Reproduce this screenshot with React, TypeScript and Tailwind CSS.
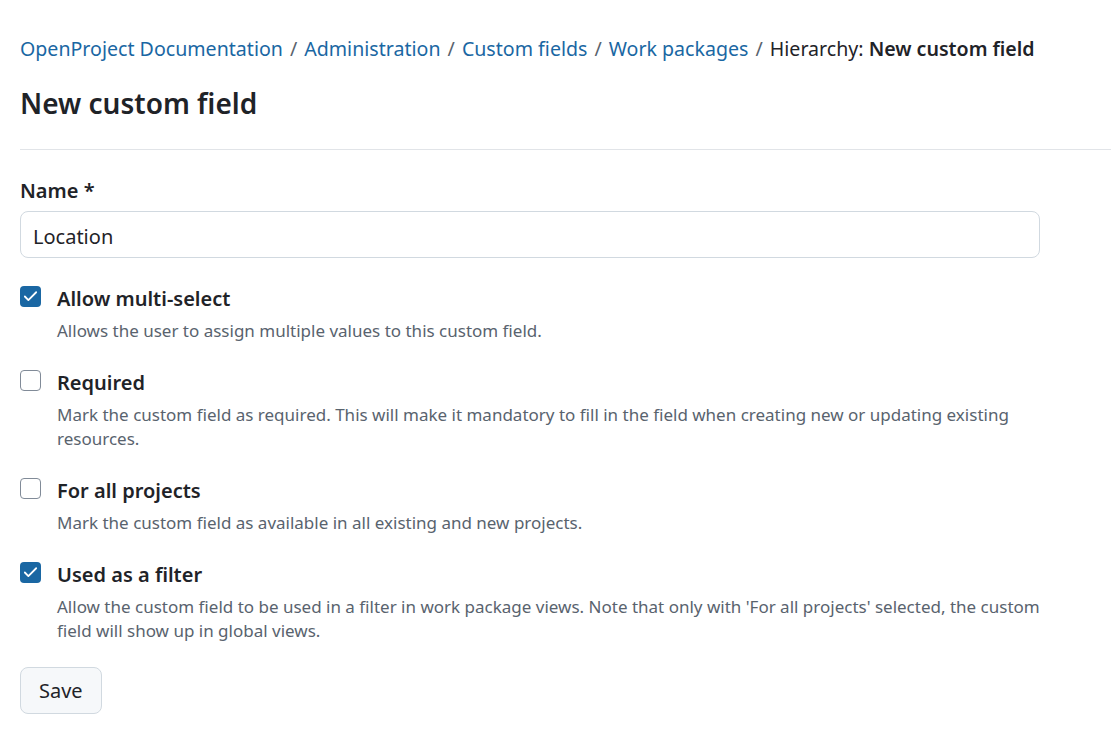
import { Check } from "lucide-react";

const options = [
  {
    label: "Allow multi-select",
    desc: "Allows the user to assign multiple values to this custom field.",
    checked: true,
  },
  {
    label: "Required",
    desc: "Mark the custom field as required. This will make it mandatory to fill in the field when creating new or updating existing resources.",
    checked: false,
  },
  {
    label: "For all projects",
    desc: "Mark the custom field as available in all existing and new projects.",
    checked: false,
  },
  {
    label: "Used as a filter",
    desc: "Allow the custom field to be used in a filter in work package views. Note that only with 'For all projects' selected, the custom field will show up in global views.",
    checked: true,
  },
];

export default function App() {
  return (
    <div
      className="min-h-screen bg-white text-[#1f2328] pt-[35px]"
      style={{ fontFamily: '"Noto Sans", "Open Sans", sans-serif' }}
    >
      {/* breadcrumb */}
      <nav className="px-5 text-[19.6px] leading-[28px] flex items-center gap-[7px]">
        <a className="text-[#1a67a3]">OpenProject Documentation</a>
        <span className="text-[#59636e]">/</span>
        <a className="text-[#1a67a3]">Administration</a>
        <span className="text-[#59636e]">/</span>
        <a className="text-[#1a67a3]">Custom fields</a>
        <span className="text-[#59636e]">/</span>
        <a className="text-[#1a67a3]">Work packages</a>
        <span className="text-[#59636e]">/</span>
        <span>
          Hierarchy: <span className="font-semibold">New custom field</span>
        </span>
      </nav>

      <h1 className="px-5 mt-[20px] text-[28px] leading-[40px] font-semibold">
        New custom field
      </h1>

      <div className="ml-5 mt-[26px] border-t border-[#e1e4e8]" />

      <form className="px-5 pt-[27px] w-[1060px]">
        <label className="block text-[20px] leading-[28px] font-semibold">
          Name *
        </label>
        <input
          defaultValue="Location"
          className="mt-[6px] w-full h-[47px] rounded-[8px] border border-[#d1d9e0] px-[12px] pt-[4px] text-[20px] outline-none"
        />

        <div className="mt-[28px] flex flex-col gap-[27px]">
          {options.map((o) => (
            <div key={o.label} className="flex gap-[16px]">
              <div
                className={
                  o.checked
                    ? "w-[21px] h-[21px] shrink-0 rounded-[4px] bg-[#1a67a3] flex items-center justify-center"
                    : "w-[21px] h-[21px] shrink-0 rounded-[4px] border border-[#818b98] bg-white"
                }
              >
                {o.checked && (
                  <Check className="w-[17px] h-[17px] text-white" strokeWidth={2.5} />
                )}
              </div>
              <div>
                <div className="text-[20px] leading-[26px] font-semibold">
                  {o.label}
                </div>
                <p className="mt-[7px] text-[17px] leading-[24px] text-[#59636e]">
                  {o.desc}
                </p>
              </div>
            </div>
          ))}
        </div>

        <button
          type="button"
          className="mt-[24px] h-[47px] px-[18px] rounded-[8px] border border-[#d1d9e0] bg-[#f6f8fa] text-[20px]"
        >
          Save
        </button>
      </form>
    </div>
  );
}
